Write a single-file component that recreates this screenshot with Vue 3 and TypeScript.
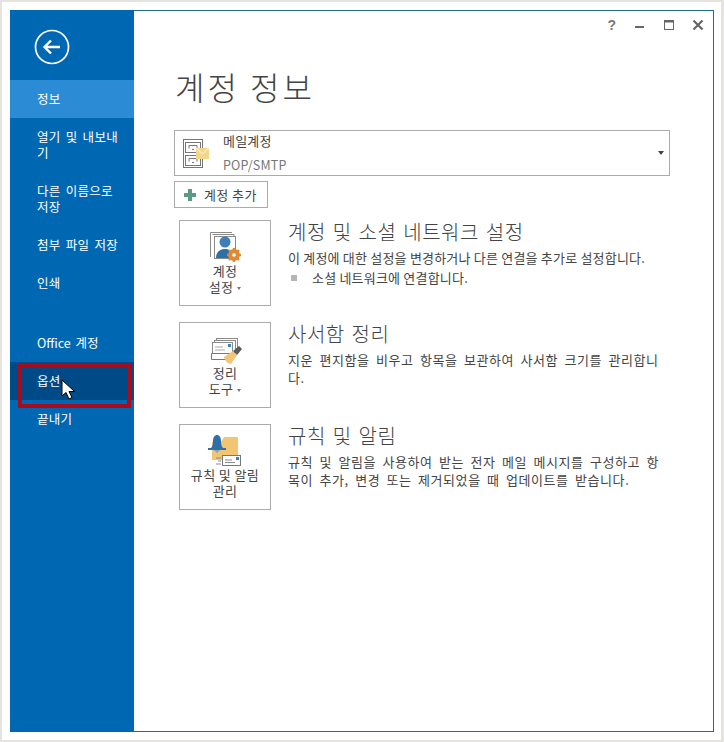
<script setup lang="ts">
interface NavItem {
  label: string;
  tall?: boolean;
  active?: boolean;
  selected?: boolean;
  gapBefore?: boolean;
}

interface Feature {
  title: string;
  lines: string[];
  button: string[];
  arrow: boolean;
  icon: 'account' | 'tools' | 'rules';
  bullet?: string;
}

const nav: NavItem[] = [
  { label: '정보', active: true },
  { label: '열기 및 내보내\n기', tall: true },
  { label: '다른 이름으로\n저장', tall: true },
  { label: '첨부 파일 저장' },
  { label: '인쇄' },
  { label: 'Office 계정', gapBefore: true },
  { label: '옵션', selected: true },
  { label: '끝내기' },
];

const features: Feature[] = [
  {
    title: '계정 및 소셜 네트워크 설정',
    lines: ['이 계정에 대한 설정을 변경하거나 다른 연결을 추가로 설정합니다.'],
    bullet: '소셜 네트워크에 연결합니다.',
    button: ['계정', '설정'],
    arrow: true,
    icon: 'account',
  },
  {
    title: '사서함 정리',
    lines: ['지운 편지함을 비우고 항목을 보관하여 사서함 크기를 관리합니', '다.'],
    button: ['정리', '도구'],
    arrow: true,
    icon: 'tools',
  },
  {
    title: '규칙 및 알림',
    lines: ['규칙 및 알림을 사용하여 받는 전자 메일 메시지를 구성하고 항', '목이 추가, 변경 또는 제거되었을 때 업데이트를 받습니다.'],
    button: ['규칙 및 알림', '관리'],
    arrow: false,
    icon: 'rules',
  },
];
</script>

<template>
  <div class="shot">
    <div class="window">
      <aside class="sidebar">
        <div class="back">
          <svg width="36" height="36" viewBox="0 0 36 36" fill="none" stroke="#fff">
            <circle cx="18" cy="18" r="16.5" stroke-width="1.7" />
            <path d="M26 18H10.5M17 11.5 10.5 18l6.500 6.500" stroke-width="2.400" />
          </svg>
        </div>
        <div
          v-for="item in nav"
          :key="item.label"
          class="nav-item"
          :class="{ tall: item.tall, active: item.active, selected: item.selected, gap: item.gapBefore }"
        >{{ item.label }}</div>
      </aside>

      <main class="content">
        <div class="win-controls">
          <span class="help">?</span>
          <svg width="12" height="12" viewBox="0 0 12 12"><rect x="1" y="7" width="9" height="2" fill="#666" /></svg>
          <svg width="12" height="12" viewBox="0 0 12 12" fill="none" stroke="#666"><rect x="1.500" y="1.500" width="9" height="9" /><path d="M1 2.500h10" stroke-width="2" /></svg>
          <svg width="12" height="12" viewBox="0 0 12 12" fill="none" stroke="#666" stroke-width="2.200"><path d="M1.500 1.500l9 9M10.500 1.500l-9 9" /></svg>
        </div>

        <h1 class="title">계정 정보</h1>

        <div class="account-box">
          <svg class="cabinet" width="30" height="30" viewBox="0 0 30 30">
            <g fill="#fff" stroke="#777">
              <rect x="0.500" y="0.500" width="19" height="28" />
              <rect x="2.500" y="3.500" width="15" height="10" />
              <rect x="2.500" y="16.500" width="15" height="10" />
            </g>
            <path d="M6 6.500h8M6 6.500v3M14 6.500v3M6 19.500h8M6 19.500v3M14 19.500v3M9 10.500h2M9 23.500h2" fill="none" stroke="#777" />
            <rect x="13" y="9" width="13" height="11" fill="#f3d689" />
            <path d="M13 9l6.500 6 6.500-6" fill="none" stroke="#fbeec5" stroke-width="1.200" />
          </svg>
          <div class="account-text">
            <div class="account-name">메일계정</div>
            <div class="account-type">POP/SMTP</div>
          </div>
          <span class="dropdown-arrow"></span>
        </div>

        <button class="add-btn">
          <svg width="12" height="12" viewBox="0 0 12 12"><path d="M4 0h4v4h4v4H8v4H4V8H0V4h4z" fill="#5b9a86" /></svg>
          <span>계정 추가</span>
        </button>

        <section v-for="f in features" :key="f.title" class="feature" :class="{ wide: f.icon !== 'account' }">
          <div class="feature-btn">
            <svg v-if="f.icon === 'account'" width="36" height="36" viewBox="0 0 36 36">
              <path d="M3.500 27V2.500H25" fill="none" stroke="#8a8a8a" />
              <path d="M5.500 4.500H27V18" fill="none" stroke="#8a8a8a" />
              <rect x="7.500" y="6.500" width="21" height="22" fill="#fff" stroke="#8a8a8a" />
              <circle cx="18" cy="12" r="5.500" fill="#3f7fb8" />
              <path d="M9 28c0-6 4-9 9-9s8 3 8 9z" fill="#2f6fa8" />
              <g fill="none" stroke="#e08a35">
                <circle cx="27" cy="25" r="4.200" stroke-width="3.400" />
                <path d="M27 18v14M20 25h14M22 20l10 10M32 20 22 30" stroke-width="2.400" />
              </g>
              <circle cx="27" cy="25" r="1.800" fill="#fff" />
            </svg>
            <svg v-else-if="f.icon === 'tools'" width="36" height="36" viewBox="0 0 36 36">
              <g fill="#fff" stroke="#8a8a8a">
                <rect x="9.500" y="6.500" width="21" height="12" />
                <rect x="7.500" y="8.500" width="21" height="12" />
                <rect x="5.500" y="10.500" width="20" height="11" />
              </g>
              <rect x="21" y="12" width="3" height="3" fill="#3f7fb8" />
              <path d="M8 15h8M8 18h10" stroke="#aaa" />
              <path d="M4.500 21.500h20M4.500 21.500v6h16" fill="none" stroke="#777" />
              <path d="M17 25l9-6 4 4-6 9c-3 0-6-3-7-7z" fill="#f1c572" />
              <path d="M26 19l6-5 3 3-5 6z" fill="#5a5a5a" />
            </svg>
            <svg v-else width="36" height="36" viewBox="0 0 36 36">
              <path d="M5 8h9l3-5h13a1 1 0 0 1 1 1v22H5z" fill="#f1c572" />
              <path d="M4 14c1-1 2-3 2-7s2-6 4-6 4 2 4 6 1 6 2 7z" fill="#2f6fa8" />
              <rect x="1" y="14" width="18" height="2" fill="#2f6fa8" />
              <path d="M7 16h6l-3 3z" fill="#7aa6cc" />
              <rect x="15.500" y="21.500" width="18" height="10" fill="#fff" stroke="#777" />
              <rect x="29" y="23" width="3" height="3" fill="#3f7fb8" />
              <path d="M18 26h7M18 28.500h10M9 24h5M11 27h3M9 30h5" stroke="#8a8a8a" />
            </svg>
            <div class="feature-btn-label">
              <div v-for="(line, i) in f.button" :key="line">
                {{ line }}<span v-if="f.arrow && i === f.button.length - 1" class="mini-arrow"></span>
              </div>
            </div>
          </div>
          <div class="feature-text">
            <h2>{{ f.title }}</h2>
            <p v-for="line in f.lines" :key="line">{{ line }}</p>
            <p v-if="f.bullet" class="bullet"><i></i>{{ f.bullet }}</p>
          </div>
        </section>
      </main>

      <!-- annotation drawn over the screenshot -->
      <div class="highlight"></div>
      <svg class="cursor" width="16" height="22" viewBox="0 0 16 22">
        <path d="M1 1v16l4-3.500 3 6.500 3-1.500-3-6h5.500z" fill="#fff" stroke="#000" />
      </svg>
    </div>
  </div>
</template>

<style scoped>
.shot {
  box-sizing: border-box;
  width: 724px;
  height: 742px;
  background: #fff;
  border: 1px solid #e4e3e0;
  border-width: 2px 3px 2px 2px;
  padding: 8px 7px 9px 8px;
  font-family: "Noto Sans CJK KR", "Noto Sans", sans-serif;
  color: #444;
}

.window {
  position: relative;
  box-sizing: border-box;
  display: flex;
  width: 704px;
  height: 722px;
  background: #fff;
  border: 1px solid #1f6c8c;
  border-left: none;
}

.sidebar {
  flex: none;
  width: 124px;
  margin: -1px 0;
  background: #0068b2;
  color: #fff;
  font-size: 12.5px;
  letter-spacing: 0.3px;
  word-spacing: 2px;
  line-height: 16px;
}

.back {
  display: flex;
  align-items: center;
  height: 70px;
  padding-left: 24px;
  padding-top: 4px;
  box-sizing: border-box;
}

.nav-item {
  display: flex;
  align-items: center;
  height: 38px;
  padding-left: 27px;
  white-space: pre-line;
}

.nav-item.tall {
  height: 54px;
}

.nav-item.active {
  background: #2b8cd5;
}

.nav-item.selected {
  background: #004b87;
}

.nav-item.gap {
  margin-top: 22px;
  letter-spacing: 0;
}

.content {
  flex: 1;
  min-width: 0;
  padding-left: 40px;
}

.win-controls {
  display: flex;
  justify-content: flex-end;
  align-items: center;
  gap: 17px;
  height: 26px;
  padding: 2px 9px 0 0;
  box-sizing: border-box;
}

.help {
  margin-right: 1px;
  font: bold 14px "Liberation Sans", sans-serif;
  color: #777;
}

.title {
  margin: 27px 0 0 1px;
  font-size: 32px;
  font-weight: 300;
  line-height: 44px;
  letter-spacing: 3px;
  color: #444;
}

.account-box {
  position: relative;
  box-sizing: border-box;
  display: flex;
  width: 496px;
  height: 46px;
  margin-top: 22px;
  padding: 8px 0 0 8px;
  border: 1px solid #ababab;
}

.cabinet {
  flex: none;
}

.account-text {
  margin-left: 10px;
  margin-top: -6px;
  font-size: 13px;
  letter-spacing: 0.2px;
}

.account-name {
  line-height: 16px;
}

.account-type {
  margin-top: 8px;
  line-height: 16px;
  font-size: 12.5px;
  color: #777;
}

.dropdown-arrow {
  position: absolute;
  right: 5px;
  top: 20px;
  border: 3px solid transparent;
  border-top: 4px solid #444;
  border-bottom: none;
}

.add-btn {
  box-sizing: border-box;
  display: flex;
  align-items: center;
  gap: 8px;
  width: 94px;
  height: 27px;
  margin-top: 5px;
  padding: 0 0 0 9px;
  background: #fff;
  border: 1px solid #ababab;
  font: inherit;
  font-size: 13px;
  letter-spacing: 0.4px;
  color: #444;
}

.feature {
  display: flex;
  gap: 17px;
  margin-left: 5px;
  margin-top: 16px;
  height: 86px;
}

.add-btn + .feature {
  margin-top: 12px;
}

.feature-btn {
  box-sizing: border-box;
  flex: none;
  display: flex;
  flex-direction: column;
  align-items: center;
  width: 92px;
  height: 86px;
  padding-top: 9px;
  border: 1px solid #ababab;
  font-size: 13px;
  letter-spacing: 0.4px;
  line-height: 16px;
  text-align: center;
}

.feature-btn-label {
  margin-top: -3px;
}

.mini-arrow {
  display: inline-block;
  margin-left: 4px;
  vertical-align: middle;
  border: 2.500px solid transparent;
  border-top: 3px solid #777;
  border-bottom: none;
}

.feature-text h2 {
  margin: 0 0 5px;
  font-size: 20px;
  font-weight: 300;
  line-height: 24px;
  letter-spacing: 0.5px;
  word-spacing: 2px;
  color: #444;
}

.feature-text p {
  margin: 0;
  font-size: 13px;
  letter-spacing: 0.2px;
  line-height: 18px;
  white-space: nowrap;
}

.feature.wide .feature-text p {
  letter-spacing: 0.55px;
  word-spacing: 3px;
}

.feature-text .bullet {
  display: flex;
  align-items: center;
  margin-top: 2px;
}

.bullet i {
  width: 6px;
  height: 6px;
  margin: 0 15px 0 3px;
  background: #b5b5b5;
}

.highlight {
  position: absolute;
  left: 8px;
  top: 352px;
  box-sizing: border-box;
  width: 113px;
  height: 45px;
  border: 4px solid #a80c1c;
  border-radius: 1px;
}

.cursor {
  position: absolute;
  left: 51px;
  top: 368px;
}
</style>

<style>
html,
body {
  margin: 0;
  background: #fff;
}
</style>
